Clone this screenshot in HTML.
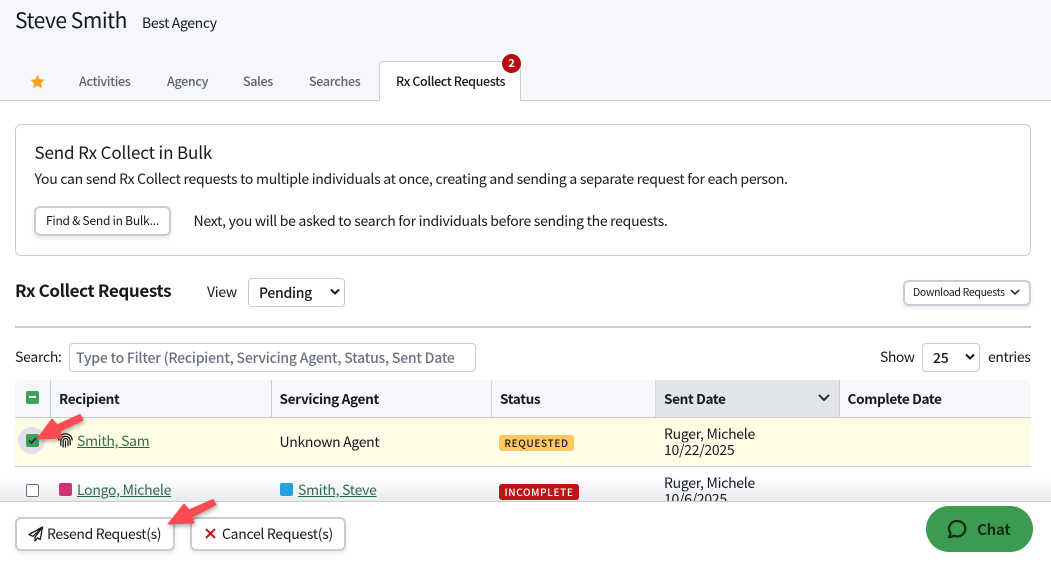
<!DOCTYPE html>
<html><head><meta charset="utf-8"><style>
html,body{margin:0;padding:0}
body{width:1051px;height:566px;overflow:hidden;position:relative;background:#fff;font-family:"Noto Sans CJK JP","Liberation Sans",sans-serif;color:#16191f;font-size:14px;letter-spacing:-.27px}
.a{position:absolute;white-space:nowrap}
.t{position:absolute;white-space:nowrap;line-height:20px}
.tab{color:#5a6271;font-size:12.5px;font-weight:500;letter-spacing:-.32px}
.th{font-weight:600;font-size:13.6px;letter-spacing:-.35px;color:#16191f}
.lnk{color:#2f6f45;text-decoration:underline;text-decoration-color:#1f6a35}
.btn{position:absolute;box-sizing:border-box;background:#fff;border:2px solid #c8ccd4;border-radius:6px;box-shadow:0 2px 4px rgba(0,0,0,.1)}
.sel{position:absolute;box-sizing:border-box;background:#fff;border:1px solid #c8ccd4;border-radius:4px}
.bdg{font-size:10px;font-weight:500;letter-spacing:.65px;line-height:16px;text-align:center;border-radius:3px}
</style></head><body>
<div class="a" style="left:0;top:0;width:1051px;height:101px;box-sizing:border-box;background:#f5f7fa;border-bottom:1px solid #c8ccd4"></div>
<div class="t" style="left:15px;top:10px;font-size:21px;letter-spacing:-.45px">Steve Smith</div>
<div class="t" style="left:142px;top:13px;font-size:14px;letter-spacing:-.36px">Best Agency</div>
<svg class="a" style="left:30px;top:74px" width="15" height="15" viewBox="0 0 24 24"><path fill="#f9a11b" d="M12 1l3.400 7.300 7.900 1-5.800 5.500 1.500 7.900L12 18.800 5 22.700l1.500-7.900L.7 9.300l7.900-1z"/></svg>
<div class="t tab" style="left:79px;top:70.500px">Activities</div>
<div class="t tab" style="left:167px;top:70.500px">Agency</div>
<div class="t tab" style="left:243px;top:70.500px">Sales</div>
<div class="t tab" style="left:309px;top:70.500px">Searches</div>
<div class="a" style="left:379px;top:61px;width:142px;height:40px;box-sizing:border-box;background:#fff;border:1px solid #c8ccd4;border-bottom:none;border-radius:4px 4px 0 0"></div>
<div class="t" style="left:396px;top:70.500px;font-size:12.5px;font-weight:500;letter-spacing:-.37px">Rx Collect Requests</div>
<div class="a" style="left:502px;top:54px;width:19px;height:19px;border-radius:50%;background:#b90e0e;color:#fff;font-size:11px;font-weight:700;text-align:center;line-height:19px">2</div>

<div class="a" style="left:15px;top:124px;width:1016px;height:132px;box-sizing:border-box;border:1px solid #c8ccd4;border-radius:6px"></div>
<div class="t" style="left:34.500px;top:142px;font-size:17px;letter-spacing:-.13px">Send Rx Collect in Bulk</div>
<div class="t" style="left:34.500px;top:169px;font-size:14px">You can send Rx Collect requests to multiple individuals at once, creating and sending a separate request for each person.</div>
<div class="btn" style="left:34px;top:206px;width:137px;height:30px"></div>
<div class="t" style="left:46px;top:211px;font-size:12px;letter-spacing:-.24px">Find &amp; Send in Bulk...</div>
<div class="t" style="left:193.500px;top:211px;font-size:14px">Next, you will be asked to search for individuals before sending the requests.</div>

<div class="t" style="left:15px;top:280px;font-size:17px;font-weight:600;letter-spacing:-.37px">Rx Collect Requests</div>
<div class="t" style="left:207px;top:282px;font-size:14px">View</div>
<div class="sel" style="left:248px;top:278px;width:97px;height:29px"></div>
<div class="t" style="left:259px;top:283px;font-size:14px;font-weight:500;letter-spacing:-.3px">Pending</div>
<svg class="a" style="left:330px;top:288px" width="10" height="8" viewBox="0 0 10 8"><path d="M1 1.500l4 4 4-4" fill="none" stroke="#16191f" stroke-width="2"/></svg>
<div class="btn" style="left:903px;top:280px;width:128px;height:26px"></div>
<div class="t" style="left:913px;top:283px;font-size:10.500px;letter-spacing:-.3px">Download Requests</div>
<svg class="a" style="left:1010px;top:289px" width="10" height="7" viewBox="0 0 10 7"><path d="M1 1l4 4 4-4" fill="none" stroke="#16191f" stroke-width="1.500"/></svg>
<div class="a" style="left:15px;top:326px;width:1016px;height:2px;background:#c8ccd4"></div>

<div class="t" style="left:15px;top:347px;font-size:14px">Search:</div>
<div class="sel" style="left:69px;top:343px;width:407px;height:29px"></div>
<div class="t" style="left:76px;top:348px;width:379px;overflow:hidden;font-size:14px;font-weight:500;letter-spacing:-.22px;color:#6b7280">Type to Filter (Recipient, Servicing Agent, Status, Sent Date)</div>
<div class="t" style="left:880px;top:347px;font-size:14px;letter-spacing:-.5px">Show</div>
<div class="sel" style="left:922px;top:343px;width:58px;height:29px"></div>
<div class="t" style="left:933px;top:348px;font-size:14px;font-weight:500">25</div>
<svg class="a" style="left:965px;top:353px" width="10" height="8" viewBox="0 0 10 8"><path d="M1 1.500l4 4 4-4" fill="none" stroke="#16191f" stroke-width="2"/></svg>
<div class="t" style="left:988px;top:347px;font-size:14px;letter-spacing:-.4px">entries</div>

<div class="a" style="left:15px;top:380px;width:1016px;height:38px;box-sizing:border-box;background:#f5f7fa;border-bottom:1px solid #c8ccd4;border-radius:6px 6px 0 0"></div>
<div class="a" style="left:655px;top:380px;width:185px;height:37px;background:#e1e4e8"></div>
<div class="a" style="left:50px;top:380px;width:1px;height:37px;background:#c8ccd4"></div>
<div class="a" style="left:271px;top:380px;width:1px;height:37px;background:#c8ccd4"></div>
<div class="a" style="left:491px;top:380px;width:1px;height:37px;background:#d5d8de"></div>
<div class="a" style="left:655px;top:380px;width:1px;height:37px;background:#d5d8de"></div>
<div class="a" style="left:839px;top:380px;width:1px;height:37px;background:#c8ccd4"></div>
<div class="a" style="left:26px;top:391px;width:13px;height:13px;border-radius:2px;background:#3da35a"></div>
<div class="a" style="left:29px;top:396px;width:7px;height:2px;background:#fff"></div>
<div class="t th" style="left:59px;top:387.500px">Recipient</div>
<div class="t th" style="left:279.500px;top:387.500px">Servicing Agent</div>
<div class="t th" style="left:500px;top:387.500px">Status</div>
<div class="t th" style="left:664px;top:387.500px">Sent Date</div>
<svg class="a" style="left:817px;top:393px" width="14" height="10" viewBox="0 0 14 10"><path d="M2 2l5 5 5-5" fill="none" stroke="#16191f" stroke-width="1.800"/></svg>
<div class="t th" style="left:847.500px;top:387.500px">Complete Date</div>

<div class="a" style="left:15px;top:418px;width:1016px;height:48px;background:#fffde6"></div>
<div class="a" style="left:15px;top:466px;width:1016px;height:1px;background:#c8ccd4"></div>
<div class="a" style="left:18px;top:427px;width:27px;height:27px;border-radius:50%;background:#dfe3e8"></div>
<div class="a" style="left:26px;top:434px;width:13px;height:13px;border-radius:2px;background:#3da35a"></div>
<svg class="a" style="left:27px;top:435px" width="11" height="11" viewBox="0 0 11 11"><path d="M2 5.500l2.500 2.500L9 3" fill="none" stroke="#2a2f36" stroke-width="1.800"/></svg>
<svg class="a" style="left:58px;top:433px" width="15" height="15" viewBox="0 0 16 16" fill="none" stroke="#111" stroke-width="1.300"><path d="M.8 8a7.200 7.200 0 0114.400 0M3 14V8.500a5 5 0 0110 0V13M5.500 15.500V8.500a2.600 2.600 0 015.200 0V14M8 15.500V8"/></svg>
<div class="t lnk" style="left:77px;top:431px">Smith, Sam</div>
<div class="t" style="left:279.500px;top:432px;letter-spacing:-.32px">Unknown Agent</div>
<div class="a bdg" style="left:499px;top:435px;width:75px;height:16px;background:#fdc75f;color:#16191f">REQUESTED</div>
<div class="t" style="left:664px;top:426px;line-height:16px">Ruger, Michele<br>10/22/2025</div>

<div class="a" style="left:0;top:467px;width:1051px;height:34px;background:linear-gradient(#fff 30%,#e9ebee)"></div>
<div class="a" style="left:26px;top:484px;width:13px;height:13px;box-sizing:border-box;border:1px solid #6b7280;border-radius:2px;background:#fff"></div>
<div class="a" style="left:59px;top:483px;width:13px;height:13px;border-radius:2px;background:#cf3274"></div>
<div class="t lnk" style="left:77px;top:480px">Longo, Michele</div>
<div class="a" style="left:280px;top:483px;width:13px;height:13px;border-radius:2px;background:#25a0e0"></div>
<div class="t lnk" style="left:298px;top:480px">Smith, Steve</div>
<div class="a bdg" style="left:499px;top:484px;width:80px;height:16px;background:#bd1414;color:#fff">INCOMPLETE</div>
<div class="t" style="left:664px;top:475px;line-height:16px">Ruger, Michele<br>10/6/2025</div>

<div class="a" style="left:0;top:501px;width:1051px;height:65px;background:#fff;border-top:1px solid #c8ccd4;box-sizing:border-box"></div>
<div class="btn" style="left:15px;top:517px;width:160px;height:34px"></div>
<svg class="a" style="left:28px;top:526px" width="16" height="16" viewBox="0 0 16 16"><path d="M14.500 1L1 8.500l4 1.800L14.500 1 7 11.200V15l2.300-3 3 1.400z" fill="#fff" stroke="#16191f" stroke-width="1.300" stroke-linejoin="round"/></svg>
<div class="t" style="left:47px;top:524px;font-size:14px;letter-spacing:-.35px">Resend Request(s)</div>
<div class="btn" style="left:190px;top:517px;width:156px;height:34px"></div>
<svg class="a" style="left:205px;top:528px" width="11" height="11" viewBox="0 0 11 11"><path d="M1 1l9 9M10 1l-9 9" stroke="#c3151b" stroke-width="2"/></svg>
<div class="t" style="left:222px;top:524px;font-size:14px;letter-spacing:-.3px">Cancel Request(s)</div>

<div class="a" style="left:926px;top:506px;width:107px;height:46px;border-radius:23px;background:#3b9c50"></div>
<svg class="a" style="left:947px;top:519px" width="20" height="21" viewBox="0 0 20 21"><path d="M10 2a8 7.700 0 00-6.500 12.200c0 1.500-.8 3-1.500 4 2 0 3.700-.7 4.800-1.600A8 7.700 0 1010 2z" fill="none" stroke="#16291c" stroke-width="2.200" stroke-linejoin="round"/></svg>
<div class="t" style="left:977px;top:520px;font-size:15px;font-weight:700;letter-spacing:-.2px;color:#16291c">Chat</div>

<svg class="a" style="left:0;top:400px;filter:drop-shadow(1px 2px 2px rgba(0,0,0,.35))" width="240" height="140" viewBox="0 0 240 140">
<path fill="#fb4a51" stroke="#fb4a51" stroke-linejoin="round" d="M37 39L52 19 57 25 80 14.500 83 20 60 31 62 38z"/>
<path fill="#fb4a51" stroke="#fb4a51" stroke-linejoin="round" d="M168 124L184 104 189 110 213 99.500 216 104.500 192 117 194 123z"/>
</svg>
</body></html>
